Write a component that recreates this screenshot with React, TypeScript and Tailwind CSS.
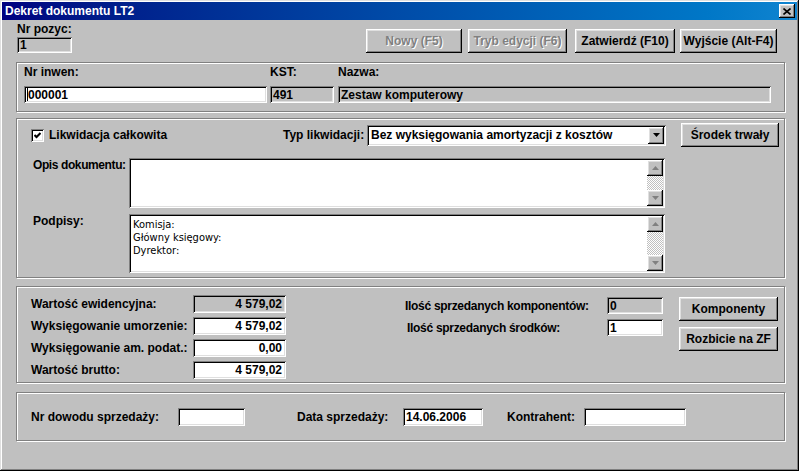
import React from 'react';

const sunken =
  'shadow-[inset_1px_1px_#808080,inset_-1px_-1px_#fff,inset_2px_2px_#000,inset_-2px_-2px_#dfdfdf]';
const raised =
  'shadow-[inset_-1px_-1px_#000,inset_1px_1px_#fff,inset_-2px_-2px_#808080,inset_2px_2px_#dfdfdf]';
const group = 'border border-[#808080] shadow-[inset_1px_1px_#fff,1px_1px_#fff]';

const Field = ({
  value = '',
  w,
  h = 'h-[18px]',
  gray = false,
  right = false,
  caret = false,
}: {
  value?: string;
  w: string;
  h?: string;
  gray?: boolean;
  right?: boolean;
  caret?: boolean;
}) => (
  <div
    className={`${w} ${h} ${sunken} ${gray ? 'bg-[#c0c0c0]' : 'bg-white'} flex items-center ${
      right ? 'justify-end pr-[4px]' : 'pl-[3px]'
    } shrink-0`}
  >
    {caret && <span className="w-px h-[13px] bg-black" />}
    <span className="leading-[14px] whitespace-nowrap">{value}</span>
  </div>
);

const Btn = ({ label, w, disabled = false }: { label: string; w: string; disabled?: boolean }) => (
  <div
    className={`${w} h-[24px] ${raised} flex items-center justify-center shrink-0 whitespace-nowrap ${
      disabled ? 'text-[#808080] [text-shadow:1px_1px_#fff]' : 'text-black'
    }`}
  >
    {label}
  </div>
);

const Arrow = ({ up, color }: { up?: boolean; color: string }) => (
  <svg width="7" height="4" viewBox="0 0 7 4">
    <polygon points={up ? '3.5,0 7,4 0,4' : '0,0 7,0 3.5,4'} fill={color} />
  </svg>
);

const ScrollBar = () => (
  <div className="w-[16px] h-full flex flex-col shrink-0">
    <div className={`h-[16px] ${raised} bg-[#c0c0c0] flex items-center justify-center`}>
      <Arrow up color="#808080" />
    </div>
    <div className="flex-1 bg-[repeating-conic-gradient(#c0c0c0_0_25%,#fff_0_50%)] bg-[length:2px_2px]" />
    <div className={`h-[16px] ${raised} bg-[#c0c0c0] flex items-center justify-center`}>
      <Arrow color="#808080" />
    </div>
  </div>
);

const Memo = ({ h, lines = [] as string[] }: { h: string; lines?: string[] }) => (
  <div className={`w-[536px] ${h} ${sunken} bg-white p-[2px] flex shrink-0`}>
    <div className="flex-1 pl-[2px] pt-[2px] font-['DejaVu_Sans_Condensed','Liberation_Sans_Narrow',sans-serif] font-normal text-[11px] leading-[13px]">
      {lines.map((l) => (
        <div key={l} className="h-[13px] whitespace-nowrap">
          {l}
        </div>
      ))}
    </div>
    <ScrollBar />
  </div>
);

export default function App() {
  return (
    <div className="w-[799px] h-[471px] bg-[#c0c0c0] p-[2px] flex flex-col font-['Liberation_Sans',Arial,sans-serif] font-bold text-[12px] text-black shadow-[inset_-1px_-1px_#000,inset_1px_1px_#dfdfdf,inset_-2px_-2px_#808080,inset_2px_2px_#fff] overflow-hidden">
      {/* Title bar */}
      <div className="h-[18px] shrink-0 flex items-center bg-gradient-to-r from-[#000080] to-[#1084d0] text-white pl-[3px] pr-[2px]">
        <span className="leading-[14px]">Dekret dokumentu LT2</span>
        <div className={`ml-auto w-[16px] h-[14px] bg-[#c0c0c0] ${raised} flex items-center justify-center`}>
          <svg width="8" height="7" viewBox="0 0 8 7">
            <path d="M0.5 0.5 L7.5 6.5 M7.5 0.5 L0.5 6.5" stroke="#000" strokeWidth="1.6" />
          </svg>
        </div>
      </div>

      {/* Top row */}
      <div className="h-[42px] shrink-0 flex items-start">
        <div className="ml-[15px] flex flex-col">
          <span className="mt-[2px] leading-[14px]">Nr pozyc:</span>
          <div className="mt-[1px]">
            <Field value="1" w="w-[55px]" h="h-[16px]" gray />
          </div>
        </div>
        <div className="ml-[294px] mt-[9px] flex">
          <Btn label="Nowy (F5)" w="w-[96px]" disabled />
          <div className="ml-[6px]">
            <Btn label="Tryb edycji (F6)" w="w-[99px]" disabled />
          </div>
          <div className="ml-[8px]">
            <Btn label="Zatwierdź (F10)" w="w-[100px]" />
          </div>
          <div className="ml-[5px]">
            <Btn label="Wyjście (Alt-F4)" w="w-[97px]" />
          </div>
        </div>
      </div>

      {/* Inventory group */}
      <div className={`ml-[14px] w-[769px] h-[50px] shrink-0 ${group} flex items-start pt-[2px]`}>
        <div className="ml-[7px] flex flex-col">
          <span className="leading-[14px]">Nr inwen:</span>
          <div className="mt-[7px]">
            <Field value="000001" w="w-[243px]" h="h-[17px]" caret />
          </div>
        </div>
        <div className="ml-[3px] flex flex-col">
          <span className="leading-[14px]">KST:</span>
          <div className="mt-[7px]">
            <Field value="491" w="w-[64px]" h="h-[17px]" gray />
          </div>
        </div>
        <div className="ml-[4px] flex flex-col">
          <span className="leading-[14px]">Nazwa:</span>
          <div className="mt-[7px]">
            <Field value="Zestaw komputerowy" w="w-[433px]" h="h-[17px]" gray />
          </div>
        </div>
      </div>

      {/* Liquidation group */}
      <div className={`ml-[14px] mt-[6px] w-[769px] h-[160px] shrink-0 ${group} flex flex-col`}>
        <div className="mt-[4px] h-[24px] flex items-center">
          <div className="w-[266px] pl-[14px] flex items-center shrink-0">
            <div className={`w-[13px] h-[13px] bg-white ${sunken} flex items-center justify-center`}>
              <svg width="7" height="7" viewBox="0 0 7 7">
                <polyline points="0.5,3 2.5,5 6.5,1" fill="none" stroke="#000" strokeWidth="2" />
              </svg>
            </div>
            <span className="ml-[5px] leading-[14px]">Likwidacja całkowita</span>
          </div>
          <span className="w-[84px] shrink-0 leading-[14px] whitespace-nowrap">Typ likwidacji:</span>
          <div className={`w-[299px] h-[21px] ${sunken} bg-white flex items-center p-[2px] shrink-0`}>
            <span className="flex-1 pl-[2px] leading-[14px] whitespace-nowrap">
              Bez wyksięgowania amortyzacji z kosztów
            </span>
            <div className={`w-[16px] h-[17px] bg-[#c0c0c0] ${raised} flex items-center justify-center`}>
              <Arrow color="#000" />
            </div>
          </div>
          <div className="ml-[15px]">
            <Btn label="Środek trwały" w="w-[98px]" />
          </div>
        </div>
        <div className="mt-[11px] flex items-start">
          <span className="w-[112px] pl-[16px] shrink-0 leading-[14px] whitespace-nowrap tracking-[-0.4px]">
            Opis dokumentu:
          </span>
          <Memo h="h-[50px]" />
        </div>
        <div className="mt-[6px] flex items-start">
          <span className="w-[112px] pl-[16px] shrink-0 leading-[14px]">Podpisy:</span>
          <Memo h="h-[59px]" lines={['Komisja:', 'Główny księgowy:', 'Dyrektor:']} />
        </div>
      </div>

      {/* Values group */}
      <div className={`ml-[14px] mt-[8px] w-[769px] h-[97px] shrink-0 ${group} flex items-start`}>
        <div className="ml-[14px] mt-[8px] flex flex-col gap-[4px]">
          {[
            ['Wartość ewidencyjna:', '4 579,02', true],
            ['Wyksięgowanie umorzenie:', '4 579,02', false],
            ['Wyksięgowanie am. podat.:', '0,00', false],
            ['Wartość brutto:', '4 579,02', false],
          ].map(([label, value, gray]) => (
            <div key={label as string} className="h-[18px] flex items-center">
              <span className="w-[162px] shrink-0 leading-[14px]">{label}</span>
              <Field value={value as string} w="w-[93px]" gray={gray as boolean} right />
            </div>
          ))}
        </div>
        <div className="ml-[119px] mt-[10px] flex flex-col gap-[5px]">
          <div className="h-[17px] flex items-center">
            <span className="w-[202px] shrink-0 leading-[14px] whitespace-nowrap tracking-[-0.3px]">
              Ilość sprzedanych komponentów:
            </span>
            <Field value="0" w="w-[56px]" h="h-[17px]" gray />
          </div>
          <div className="h-[17px] flex items-center">
            <span className="w-[202px] shrink-0 pl-[2px] leading-[14px] whitespace-nowrap tracking-[-0.3px]">
              Ilość sprzedanych środków:
            </span>
            <Field value="1" w="w-[56px]" h="h-[17px]" />
          </div>
        </div>
        <div className="ml-[16px] mt-[10px] flex flex-col gap-[6px]">
          <Btn label="Komponenty" w="w-[99px]" />
          <Btn label="Rozbicie na ZF" w="w-[99px]" />
        </div>
      </div>

      {/* Sale group */}
      <div className={`ml-[14px] mt-[9px] w-[769px] h-[49px] shrink-0 ${group} flex items-center`}>
        <span className="ml-[14px] w-[147px] shrink-0 leading-[14px]">Nr dowodu sprzedaży:</span>
        <Field w="w-[67px]" />
        <span className="ml-[52px] w-[106px] shrink-0 leading-[14px]">Data sprzedaży:</span>
        <Field value="14.06.2006" w="w-[80px]" />
        <span className="ml-[24px] w-[77px] shrink-0 leading-[14px]">Kontrahent:</span>
        <Field w="w-[102px]" />
      </div>
    </div>
  );
}
